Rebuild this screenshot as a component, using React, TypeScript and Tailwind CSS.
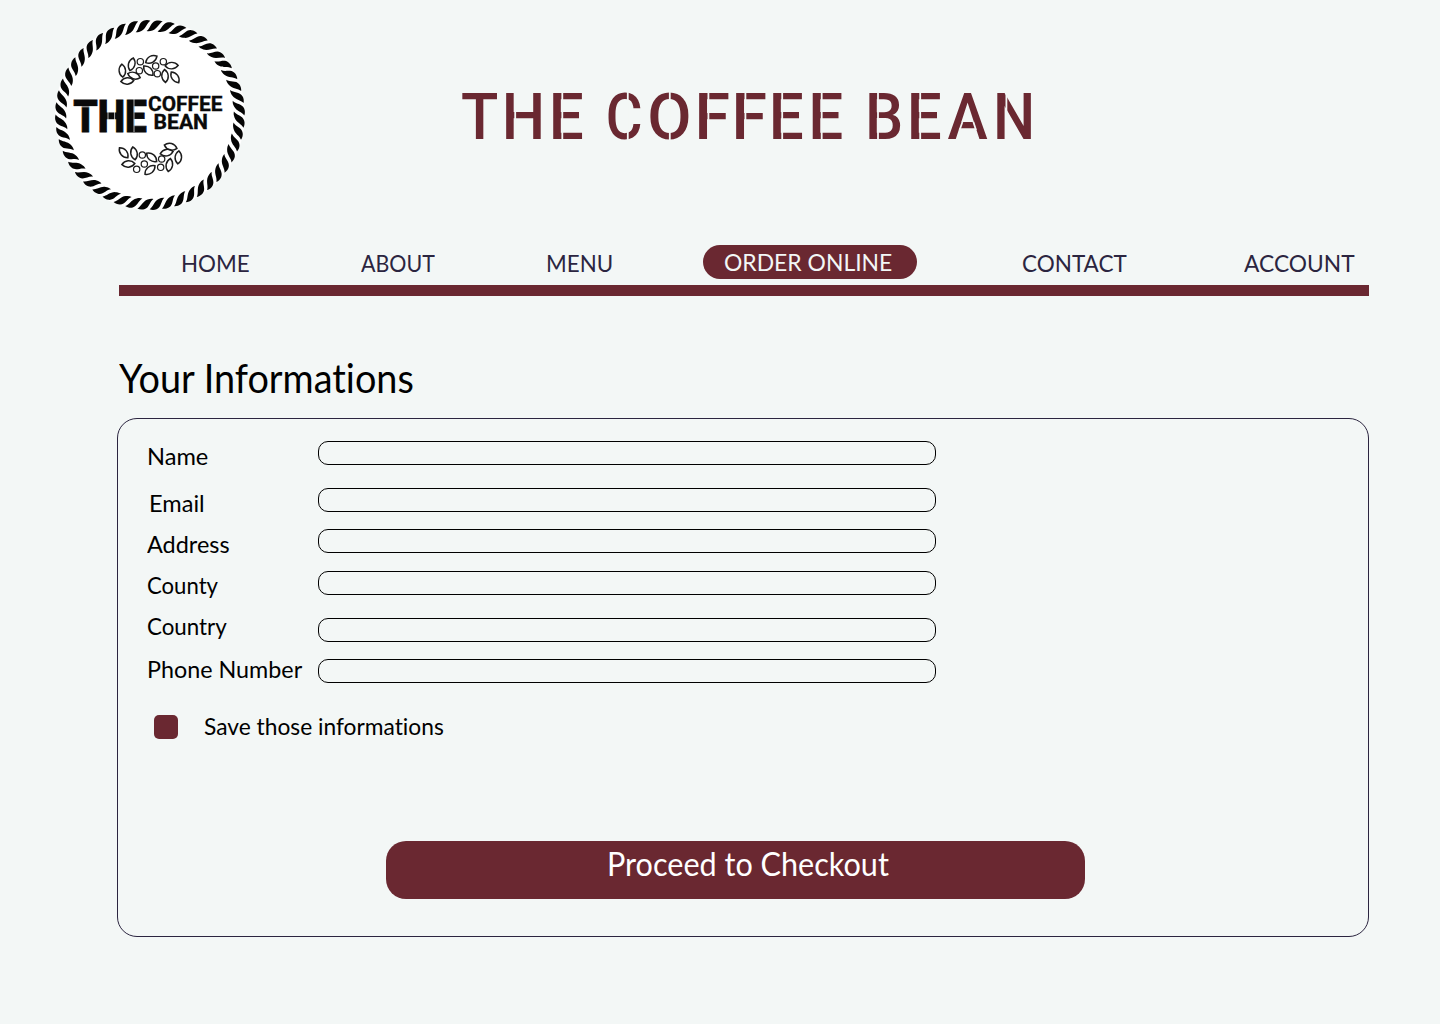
import { useLayoutEffect, useRef, useState } from "react";

// Single line of text condensed horizontally to a given width.
function Fit({ text, width }: { text: string; width: number }) {
  const ref = useRef<HTMLSpanElement>(null);
  const [scale, setScale] = useState(1);
  useLayoutEffect(() => {
    if (ref.current) setScale(width / ref.current.offsetWidth);
  }, [width, text]);
  return (
    <span className="block" style={{ width }}>
      <span
        ref={ref}
        className="inline-block origin-left whitespace-nowrap align-top [font-variant-ligatures:none]"
        style={{ transform: `scaleX(${scale})` }}
      >
        {text}
      </span>
    </span>
  );
}

const leaf = "M0-17C13-8 13 8 0 17C-13 8-13-8 0-17Z";

const topLeaves = [
  [37, 62, -4], [65, 43, 15], [52, 93, 85], [72, 77, 108], [115, 62, -45],
  [124, 28, 60], [185, 47, 88], [165, 78, -5], [195, 82, -35],
];
const topBeans = [[91, 35], [88, 62], [137, 48], [160, 35], [142, 71]];
const bottomLeaves = [
  [41, 38, -40], [72, 40, -10], [55, 72, 85], [125, 52, -50], [120, 90, 50],
  [170, 38, 80], [205, 52, 5], [178, 75, 10], [182, 20, 105],
];
const bottomBeans = [[97, 45], [103, 72], [80, 88], [155, 57], [152, 82]];

function Sprig({ x, y, leaves, beans }: { x: number; y: number; leaves: number[][]; beans: number[][] }) {
  return (
    <g transform={`translate(${x} ${y}) scale(.3333)`} fill="none" stroke="#1c1c1c" strokeWidth="4.2">
      {leaves.map(([a, b, r]) => (
        <path key={`${a}-${b}`} d={leaf} transform={`translate(${a} ${b}) rotate(${r}) scale(1 1.15)`} />
      ))}
      {beans.map(([a, b]) => (
        <circle key={`${a}-${b}`} cx={a} cy={b} r="9.5" strokeWidth="3.6" />
      ))}
    </g>
  );
}

function Logo() {
  return (
    <svg className="block h-[192px] w-[192px]" viewBox="54 19 192 192">
      <circle cx="150" cy="115" r="95" fill="#fff" />
      {Array.from({ length: 48 }, (_, i) => (
        <path
          key={i}
          transform={`translate(150 115) rotate(${i * 7.5 + 3}) translate(0 -89.4)`}
          d="M-7.8 5.8C-4 3-4.4-3.2 .8-5C3-5.8 5.6-5.6 7.8-4.6C4 -2.6 3 2.8-2 4.9C-4 5.8-5.8 6.2-7.8 5.8Z"
          fill="#050505"
        />
      ))}
      <Sprig x={110} y={50} leaves={topLeaves} beans={topBeans} />
      <Sprig x={110} y={140} leaves={bottomLeaves} beans={bottomBeans} />
      <g fill="#0a0a0a" stroke="#0a0a0a" strokeWidth=".3" fontFamily="Roboto, sans-serif" fontWeight="900">
        <text x="73.2" y="131.5" fontSize="45" strokeWidth=".8" textLength="73.6" lengthAdjust="spacingAndGlyphs">
          THE
        </text>
        <text x="148" y="111.4" fontSize="19.4" fontWeight="700" textLength="74.5" lengthAdjust="spacingAndGlyphs">
          COFFEE
        </text>
        <text x="153.5" y="129.3" fontSize="19.4" fontWeight="700" textLength="54.5" lengthAdjust="spacingAndGlyphs">
          BEAN
        </text>
      </g>
      <path
        d="M73 106.8H98M108 98V132M114.6 98V132M134 98V132"
        stroke="#fff"
        strokeWidth=".7"
        fill="none"
      />
    </svg>
  );
}

const glyphs: [string, number, number][] = [
  ["T", 461, 37.3], ["H", 501.8, 43.4], ["E", 548.8, 35],
  ["C", 605.7, 36.7], ["O", 647.3, 44.3], ["F", 694.6, 35.5], ["F", 731.6, 35.5], ["E", 768.8, 35], ["E", 808.2, 35],
  ["B", 864.9, 38.2], ["E", 906.8, 35], ["A", 947.4, 40.2], ["N", 992.9, 42.2],
];

function Wordmark() {
  return (
    <svg className="block h-[110px] w-[630px]" viewBox="435 60 630 110" role="heading" aria-label="THE COFFEE BEAN">
      <text y="139" fontSize="65" fontWeight="500" fontFamily="Roboto, sans-serif" fill="#6a2831">
        {glyphs.map(([c, x, w], i) => (
          <tspan key={i} x={x} textLength={w} lengthAdjust="spacingAndGlyphs">
            {c}
          </tspan>
        ))}
      </text>
      <path
        d="M515.2 99V133M562.3 90V141M627.8 90V141M669.8 90V141M708.4 90V141M745.4 90V141M782.2 90V141M821.7 90V141M878 90V141M920.2 90V141M1006.4 90V141M962.4 122L959.6 130M973.4 122L976 130"
        stroke="#f3f7f6"
        strokeWidth="1.8"
        fill="none"
      />
    </svg>
  );
}

const labels: [string, number, string][] = [
  ["Name", 61, "mt-[25px]"],
  ["Email", 56, "mt-[23px] ml-[2px]"],
  ["Address", 83, "mt-[17px]"],
  ["County", 71, "mt-[17px]"],
  ["Country", 80, "mt-[17px]"],
  ["Phone Number", 155.5, "mt-[19px]"],
];
const fields = ["mt-[22px]", "mt-[23px]", "mt-[17px]", "mt-[18px]", "mt-[23px]", "mt-[17px]"];

export default function App() {
  return (
    <div className="h-[1024px] w-[1440px] overflow-hidden bg-[#f3f7f6] font-[Lato,sans-serif] text-black">
      <header className="flex h-[245px] pt-[19px] pl-[54px]">
        <Logo />
        <div className="ml-[189px] pt-[41px]">
          <Wordmark />
        </div>
      </header>

      <nav className="ml-[119px] flex h-10 w-[1250px] text-2xl leading-6 text-[#2b2540]">
        <a className="mt-[6px] ml-[62px]"><Fit text="HOME" width={69} /></a>
        <a className="mt-[6px] ml-[111px]"><Fit text="ABOUT" width={74} /></a>
        <a className="mt-[6px] ml-[111px]"><Fit text="MENU" width={67} /></a>
        <a className="ml-[90px] h-[34px] w-[214px] rounded-[17px] bg-[#6a2831] pt-[5px] pl-[21px] text-[#f3f7f6]">
          <Fit text="ORDER ONLINE" width={168} />
        </a>
        <a className="mt-[6px] ml-[105px]"><Fit text="CONTACT" width={105} /></a>
        <a className="mt-[6px] ml-[117px]"><Fit text="ACCOUNT" width={111} /></a>
      </nav>
      <div className="ml-[119px] h-[11px] w-[1250px] bg-[#6a2831]" />

      <h1 className="mt-[58px] ml-[119px] h-16 text-[40px] leading-[48px]">
        <Fit text="Your Informations" width={295} />
      </h1>

      <main className="ml-[117px] h-[519px] w-[1252px] rounded-[20px] border border-[#2b2540]">
        <div className="flex pl-[29px]">
          <div className="w-[171px] text-2xl leading-6">
            {labels.map(([text, width, cls]) => (
              <div key={text} className={cls}>
                <Fit text={text} width={width} />
              </div>
            ))}
          </div>
          <div>
            {fields.map((cls, i) => (
              <div key={i} className={`h-6 w-[618px] rounded-[10px] border border-black ${cls}`} />
            ))}
          </div>
        </div>

        <div className="mt-8 ml-9 flex h-6 gap-[26px] text-2xl leading-[22px]">
          <div className="h-6 w-6 rounded-[5px] bg-[#6a2831]" />
          <Fit text="Save those informations" width={240} />
        </div>

        <button className="mt-[102px] ml-[268px] block h-[58px] w-[699px] rounded-[20px] bg-[#6a2831] text-left text-[32px] leading-[38px] text-white">
          <span className="-mt-[13px] ml-[221px] block">
            <Fit text="Proceed to Checkout" width={282} />
          </span>
        </button>
      </main>
    </div>
  );
}
